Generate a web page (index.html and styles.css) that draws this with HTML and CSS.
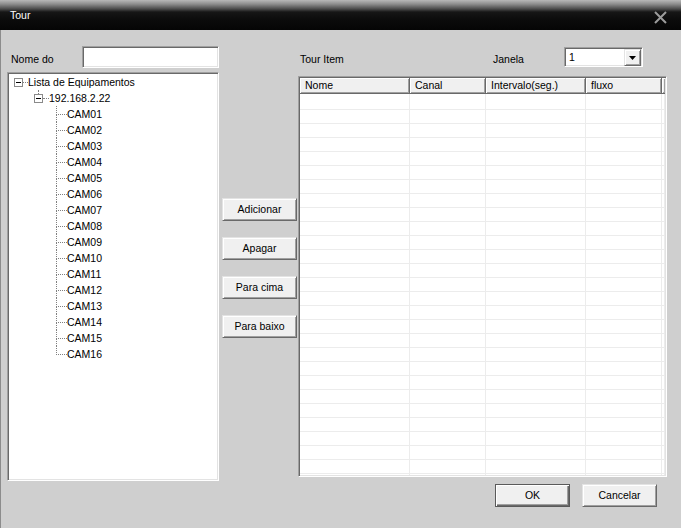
FILE: index.html
```html
<!DOCTYPE html>
<html lang="pt">
<head>
<meta charset="utf-8">
<title>Tour</title>
<link rel="stylesheet" href="styles.css">
</head>
<body>
<div class="window">
  <div class="titlebar">
    <span class="title">Tour</span>
    <svg class="close" width="13" height="13" viewBox="0 0 13 13"><path d="M1 1L12 12M12 1L1 12" stroke="#9c9c9c" stroke-width="2"/></svg>
  </div>
  <div class="content">
    <div class="col-left">
      <div class="namerow">
        <span class="label">Nome do</span>
        <input class="field sunken" type="text">
      </div>
      <div class="tree sunken">
        <div class="row root">
          <svg class="exp" width="9" height="9" viewBox="0 0 9 9"><rect x="0.5" y="0.5" width="8" height="8" fill="#fff" stroke="#8a8a8a"/><path d="M2 4.5h5" stroke="#000"/></svg>
          <span class="hl hl-root"></span>
          <span class="lbl">Lista de Equipamentos</span>
        </div>
        <div class="row host">
          <span class="exp-col"><span class="stub"></span><svg class="exp" width="9" height="9" viewBox="0 0 9 9"><rect x="0.5" y="0.5" width="8" height="8" fill="#fff" stroke="#8a8a8a"/><path d="M2 4.5h5" stroke="#000"/></svg></span>
          <span class="hl hl-host"></span>
          <span class="lbl">192.168.2.22</span>
        </div>
        <div class="row cam"><span class="conn"></span><span class="lbl">CAM01</span></div>
        <div class="row cam"><span class="conn"></span><span class="lbl">CAM02</span></div>
        <div class="row cam"><span class="conn"></span><span class="lbl">CAM03</span></div>
        <div class="row cam"><span class="conn"></span><span class="lbl">CAM04</span></div>
        <div class="row cam"><span class="conn"></span><span class="lbl">CAM05</span></div>
        <div class="row cam"><span class="conn"></span><span class="lbl">CAM06</span></div>
        <div class="row cam"><span class="conn"></span><span class="lbl">CAM07</span></div>
        <div class="row cam"><span class="conn"></span><span class="lbl">CAM08</span></div>
        <div class="row cam"><span class="conn"></span><span class="lbl">CAM09</span></div>
        <div class="row cam"><span class="conn"></span><span class="lbl">CAM10</span></div>
        <div class="row cam"><span class="conn"></span><span class="lbl">CAM11</span></div>
        <div class="row cam"><span class="conn"></span><span class="lbl">CAM12</span></div>
        <div class="row cam"><span class="conn"></span><span class="lbl">CAM13</span></div>
        <div class="row cam"><span class="conn"></span><span class="lbl">CAM14</span></div>
        <div class="row cam"><span class="conn"></span><span class="lbl">CAM15</span></div>
        <div class="row cam last"><span class="conn"></span><span class="lbl">CAM16</span></div>
      </div>
    </div>

    <div class="col-mid">
      <button class="btn">Adicionar</button>
      <button class="btn">Apagar</button>
      <button class="btn">Para cima</button>
      <button class="btn">Para baixo</button>
    </div>

    <div class="col-right">
      <div class="toprow">
        <span class="label tour-item">Tour Item</span>
        <span class="label janela">Janela</span>
        <div class="select sunken">
          <span class="sel-val">1</span>
          <span class="sel-btn"><svg width="7" height="4" viewBox="0 0 7 4"><path d="M0 0h7L3.5 4z" fill="#000"/></svg></span>
        </div>
      </div>
      <div class="grid sunken">
        <div class="ghead">
          <div class="th">Nome</div>
          <div class="th">Canal</div>
          <div class="th">Intervalo(seg.)</div>
          <div class="th">fluxo</div>
          <div class="th th-stub"></div>
        </div>
        <div class="gbody">
          <div class="gcol"></div>
          <div class="gcol"></div>
          <div class="gcol"></div>
          <div class="gcol"></div>
          <div class="gcol"></div>
        </div>
      </div>
      <div class="footer">
        <button class="btn btn-default">OK</button>
        <button class="btn">Cancelar</button>
      </div>
    </div>
  </div>
</div>
</body>
</html>
```

FILE: styles.css
```css
html, body {
  margin: 0;
  padding: 0;
}

body {
  width: 681px;
  height: 528px;
  overflow: hidden;
  background: #cfcfcf;
  font-family: "Liberation Sans", Arial, sans-serif;
  font-size: 10.5px;
  color: #000;
}

.window {
  width: 681px;
  height: 528px;
  display: flex;
  flex-direction: column;
}

.titlebar {
  height: 30px;
  flex: none;
  display: flex;
  justify-content: space-between;
  align-items: flex-start;
  padding: 0 14px 0 10px;
  box-sizing: border-box;
  background: linear-gradient(to bottom, #b8b8b8 0px, #8e8e8e 4px, #4a4a4a 9px, #161616 12px, #0b0b0b 20px, #050505 30px);
}

.title {
  color: #fff;
  line-height: 13px;
  margin-top: 9px;
}

.close {
  margin-top: 11px;
}

.content {
  flex: 1;
  display: flex;
  align-items: flex-start;
  padding: 16px 0 0 6px;
  border-left: 1px solid #8c8c8c;
}

.sunken {
  border: 1px solid;
  border-color: #a0a0a0 #fff #fff #a0a0a0;
  box-shadow: inset 1px 1px 0 #696969, inset -1px -1px 0 #e3e3e3;
  background: #fff;
  box-sizing: border-box;
}

.label {
  line-height: 26px;
  white-space: nowrap;
}

/* left column */
.col-left {
  width: 212px;
  flex: none;
}

.namerow {
  height: 22px;
  display: flex;
  align-items: flex-start;
  padding-left: 4px;
}

.field {
  margin: 0 0 0 auto;
  width: 137px;
  height: 22px;
  padding: 0 3px;
  font: inherit;
  outline: none;
}

.tree {
  margin-top: 4px;
  height: 409px;
  padding: 1px 0 0 1px;
}

.row {
  height: 16px;
  display: flex;
  align-items: center;
  white-space: nowrap;
}

.lbl {
  line-height: 16px;
}

.exp {
  display: block;
  flex: none;
}

.hl {
  height: 0;
  border-top: 1px dotted #808080;
  flex: none;
}

.root {
  padding-left: 5px;
}

.hl-root {
  width: 5px;
}

.host {
  padding-left: 25px;
}

.exp-col {
  align-self: flex-start;
  display: flex;
  flex-direction: column;
}

.stub {
  height: 4px;
  width: 0;
  margin-left: 4px;
  border-left: 1px dotted #808080;
}

.hl-host {
  width: 6px;
}

.cam {
  padding-left: 47px;
  align-items: stretch;
}

.conn {
  width: 11px;
  flex: none;
  display: flex;
  flex-direction: column;
}

.conn::before {
  content: "";
  display: block;
  height: 9px;
  box-sizing: border-box;
  border-left: 1px dotted #808080;
  border-bottom: 1px dotted #808080;
}

.conn::after {
  content: "";
  display: block;
  height: 7px;
  box-sizing: border-box;
  border-left: 1px dotted #808080;
}

.last .conn::after {
  border-left: none;
}

/* middle buttons */
.col-mid {
  width: 75px;
  flex: none;
  margin-left: 3px;
  padding-top: 152px;
  display: flex;
  flex-direction: column;
  gap: 16px;
}

.btn {
  width: 75px;
  height: 23px;
  margin: 0;
  padding: 0;
  font: inherit;
  color: #000;
  background: #f0f0f0;
  border: 1px solid;
  border-color: #e3e3e3 #696969 #696969 #e3e3e3;
  box-shadow: inset 1px 1px 0 #fff, inset -1px -1px 0 #a0a0a0;
  box-sizing: border-box;
  line-height: 21px;
  text-align: center;
}

.btn-default {
  border-color: #5a5a5a;
  box-shadow: inset 1px 1px 0 #fff, inset -1px -1px 0 #696969, inset -2px -2px 0 #a0a0a0;
}

/* right column */
.col-right {
  width: 369px;
  flex: none;
  margin-left: 1px;
}

.toprow {
  height: 22px;
  display: flex;
  align-items: flex-start;
}

.tour-item {
  padding-left: 2px;
}

.janela {
  margin-left: auto;
  width: 71px;
}

.select {
  margin-top: 1px;
  margin-right: 24px;
  width: 79px;
  height: 20px;
  display: flex;
  align-items: center;
  padding: 1px;
}

.sel-val {
  flex: 1;
  padding-left: 3px;
  line-height: 16px;
}

.sel-btn {
  width: 17px;
  height: 17px;
  align-self: flex-start;
  display: flex;
  align-items: center;
  justify-content: center;
  background: #f0f0f0;
  border: 1px solid;
  border-color: #e3e3e3 #696969 #696969 #e3e3e3;
  box-shadow: inset 1px 1px 0 #fff, inset -1px -1px 0 #a0a0a0;
  box-sizing: border-box;
}

.grid {
  margin-top: 8px;
  height: 401px;
  padding: 1px;
  display: flex;
  flex-direction: column;
}

.ghead,
.gbody {
  display: grid;
  grid-template-columns: 110px 76px 100px 76px 3px;
}

.ghead {
  height: 16px;
  flex: none;
}

.th {
  background: #f0f0f0;
  border-right: 1px solid #696969;
  border-bottom: 1px solid #696969;
  box-shadow: inset 1px 1px 0 #fff, inset -1px -1px 0 #a0a0a0;
  box-sizing: border-box;
  padding-left: 5px;
  line-height: 15px;
  white-space: nowrap;
  overflow: hidden;
}

.th-stub {
  padding: 0;
  border-right: none;
}

.gbody {
  flex: 1;
  background: #fff repeating-linear-gradient(to bottom, transparent 0 13px, #ececec 13px 14px);
  background-position: 0 2px;
}

.gcol {
  border-right: 1px solid #ececec;
}

.footer {
  margin-top: 7px;
  display: flex;
  justify-content: flex-end;
  gap: 12px;
  padding-right: 10px;
}
```
